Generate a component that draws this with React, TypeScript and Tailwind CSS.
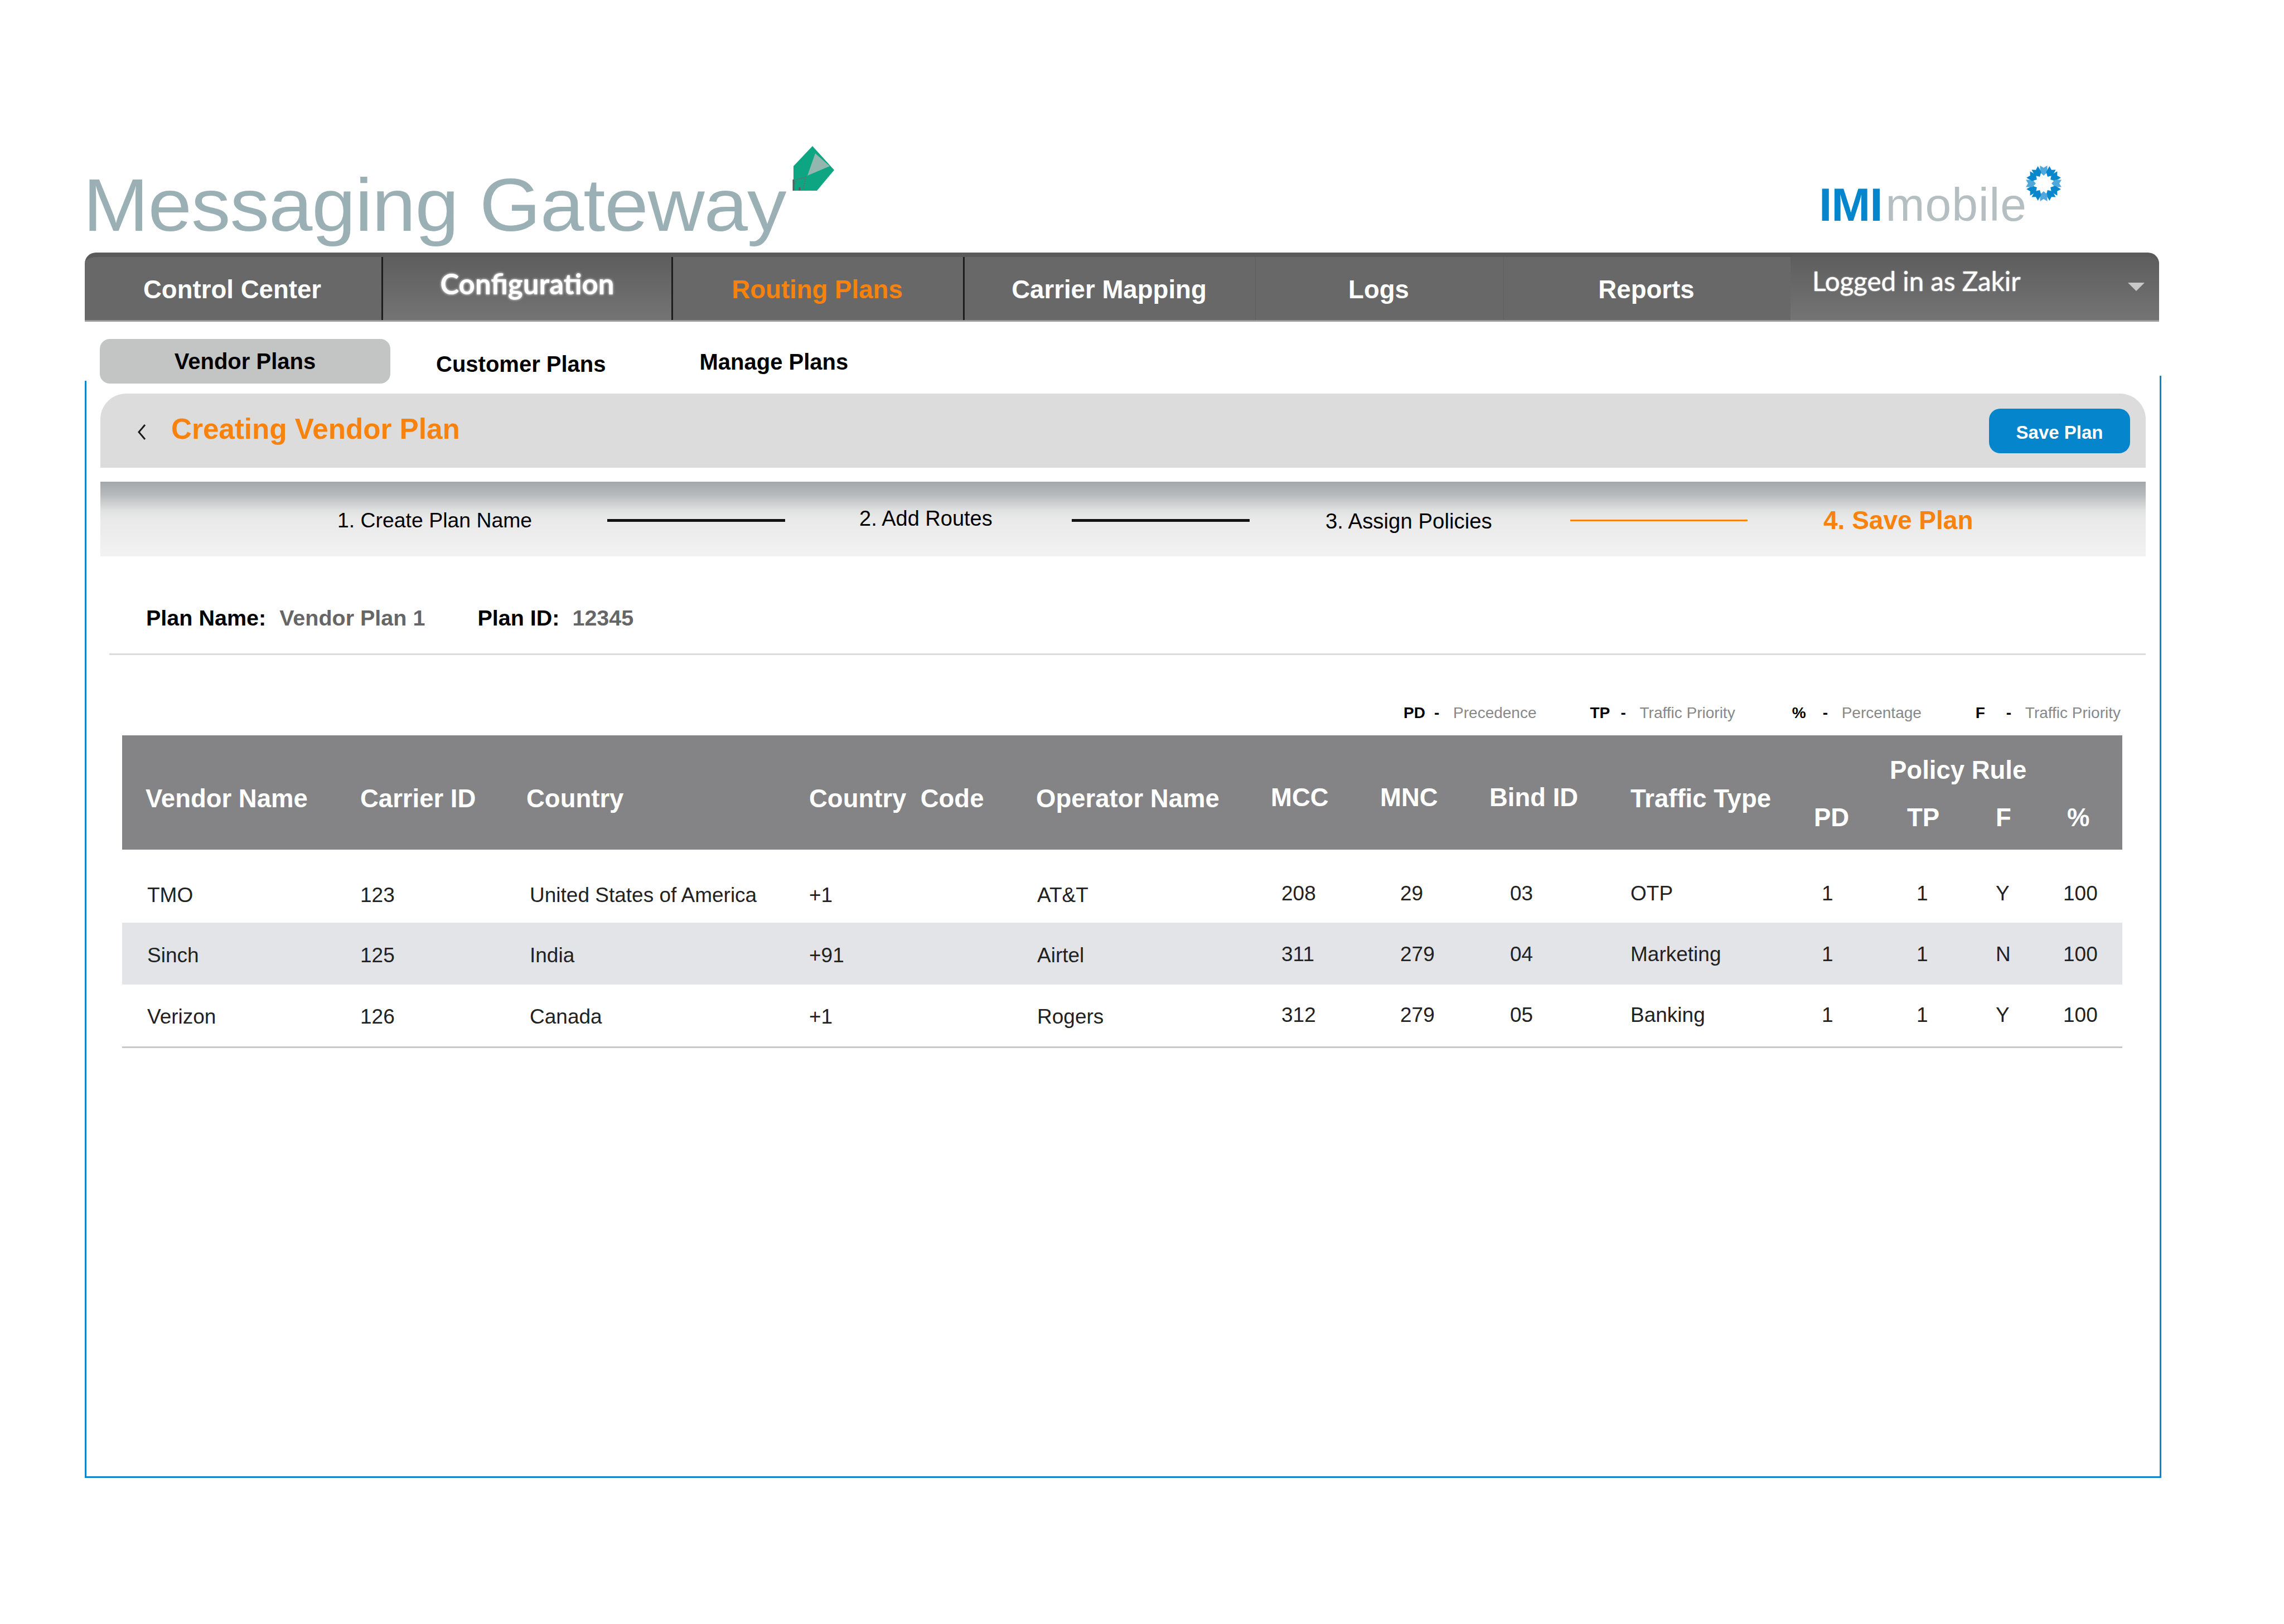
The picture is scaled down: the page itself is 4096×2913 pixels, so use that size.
import React from 'react';

const GRID = 'grid grid-cols-[427px_298px_507px_407px_421px_196px_196px_253px_329px_167px_159px_128px_99px]';

const rows = [
  ['TMO', '123', 'United States of America', '+1', 'AT&T', '208', '29', '03', 'OTP', '1', '1', 'Y', '100'],
  ['Sinch', '125', 'India', '+91', 'Airtel', '311', '279', '04', 'Marketing', '1', '1', 'N', '100'],
  ['Verizon', '126', 'Canada', '+1', 'Rogers', '312', '279', '05', 'Banking', '1', '1', 'Y', '100'],
];

// offset of each body cell from its column start, plus the small lift the right hand columns have
const cellClass = [
  'pl-[45px]',
  'pl-0',
  'pl-[6px]',
  'pl-0',
  'pl-[2px]',
  'pl-[19px] pb-[5px]',
  'pl-[36px] pb-[5px]',
  'pl-[37px] pb-[5px]',
  'pl-0 pb-[5px]',
  'pl-[14px] pb-[5px]',
  'pl-[17px] pb-[5px]',
  'pl-0 pb-[5px]',
  '-ml-[7px] pb-[5px]',
];

const legend = [
  { key: 'PD', text: 'Precedence', cls: 'mr-[96px]' },
  { key: 'TP', text: 'Traffic Priority', cls: 'mr-[102px]' },
  { key: '%', text: 'Percentage', cls: 'mr-[97px]' },
  { key: 'F', text: 'Traffic Priority', cls: '' },
];

const GemIcon = () => (
  <svg width="80" height="86" viewBox="0 0 80 86" className="absolute left-[1421px] top-[260px]">
    <polygon points="36,2 75,45 44,82 2,82 2,38" fill="#0ea583" />
    <polygon points="41,15 67,38 27,55" fill="#93b6ae" />
    <path d="M4 70 L8 62 L24 58 L20 78" fill="none" stroke="#6a6a6a" strokeWidth="2" strokeDasharray="2 2" />
    <path d="M2 62 V82 M13 76 V82" stroke="#5a5a5a" strokeWidth="3" />
  </svg>
);

const SunIcon = () => (
  <svg width="68" height="68" viewBox="-34 -34 68 68" className="absolute left-[-3px] top-[-9px]">
    {Array.from({ length: 12 }).map((_, i) => (
      <polygon
        key={i}
        points="-6.5,-32 0,-28 6.5,-32 6.5,-20 0,-14 -6.5,-20"
        fill={i % 3 === 0 ? '#4ea8dc' : '#0a86cc'}
        transform={`rotate(${i * 30})`}
      />
    ))}
  </svg>
);

const NavItem = ({ label, width, className = '' }: { label: string; width: string; className?: string }) => (
  <div className={`${width} h-full flex items-center justify-center pt-[5px] pr-[3px] text-[45.6px] font-bold ${className}`}>
    {label}
  </div>
);

export default function App() {
  return (
    <div className="w-[4096px] h-[2913px] bg-white font-['Liberation_Sans',sans-serif] text-black overflow-hidden">
      {/* logos */}
      <div className="relative h-[453px] pt-[302px] pl-[149px] flex">
        <div className="text-[133px] leading-none text-[#9ab0b5] tracking-[-1px] origin-left scale-x-[1.061]">Messaging Gateway</div>
        <GemIcon />
        <div className="ml-auto mr-[461px] mt-[23px] flex leading-none text-[84px] relative h-[84px]">
          <span className="font-bold text-[#0585cc] tracking-[-1px]">IMI</span>
          <span className="ml-[6px] text-[#b5bfc2] tracking-[1px]">mobile</span>
          <div className="absolute left-[372px] top-[-21px]">
            <SunIcon />
          </div>
        </div>
      </div>

      {/* main nav */}
      <div className="mx-[152px] w-[3720px] h-[124px] rounded-t-[20px] overflow-hidden flex text-white bg-[#686868] border-t-[8px] border-t-[#5a5a5a] border-b-[3px] border-b-[#9a9a9a]">
        <NavItem label="Control Center" width="w-[535px]" className="border-r-[3px] border-r-[#1d1d1d]" />
        <div className="w-[520px] h-full flex items-center justify-center pb-[16px] text-[51px] font-bold font-['Lato',sans-serif] bg-gradient-to-b from-[#5e5e5e] to-[#747474] border-r-[3px] border-r-[#1d1d1d] [text-shadow:0_0_4px_#ffffff]">
          Configuration
        </div>
        <NavItem label="Routing Plans" width="w-[523px]" className="text-[#f7830e] border-r-[3px] border-r-[#1d1d1d]" />
        <NavItem label="Carrier Mapping" width="w-[522px]" className="border-r border-r-[#5e5e5e]" />
        <NavItem label="Logs" width="w-[445px]" className="border-r border-r-[#5e5e5e]" />
        <NavItem label="Reports" width="w-[514px]" />
        <div className="flex-1 h-full flex items-start pl-[39px] pr-[26px] pt-[13px] bg-gradient-to-b from-[#5e5e5e] to-[#747474]">
          <span className="text-[47.5px] leading-[60px] font-['Lato',sans-serif] [text-shadow:0_0_2px_#ffffff]">Logged in as Zakir</span>
          <span className="ml-auto mt-[33px] w-0 h-0 border-x-[15px] border-x-transparent border-t-[15px] border-t-[#c8c8c8]" />
        </div>
      </div>

      {/* sub tabs */}
      <div className="h-[106px] pl-[179px] pt-[31px] flex items-start text-[40px] font-bold">
        <div className="w-[521px] h-[80px] rounded-[18px] bg-[#c3c4c4] flex items-center justify-center">Vendor Plans</div>
        <div className="ml-[82px] mt-[20px] leading-[50px]">Customer Plans</div>
        <div className="ml-[168px] mt-[16px] leading-[50px]">Manage Plans</div>
      </div>

      {/* panel */}
      <div className="relative ml-[152px] w-[3724px] h-[1968px] border-x-[3px] border-b-[3px] border-[#0a86cc] pt-[23px] pl-[25px] pr-[25px]">
        <span className="absolute right-[-3px] top-[-9px] w-[3px] h-[9px] bg-[#0a86cc]" />
        <div className="h-[133px] rounded-t-[46px] bg-[#dcdcdc] flex items-center pl-[64px] pr-[28px]">
          <svg width="20" height="32" viewBox="0 0 20 32" className="mt-[4px]">
            <path d="M16 3 L5 16 L16 29" fill="none" stroke="#1a1a1a" strokeWidth="3" />
          </svg>
          <div className="ml-[43px] mb-[5px] text-[51.2px] font-bold text-[#f7830e]">Creating Vendor Plan</div>
          <button className="ml-auto w-[253px] h-[80px] pt-[6px] rounded-[20px] bg-[#0585cc] text-white text-[33px] font-bold">Save Plan</button>
        </div>

        {/* steps */}
        <div className="mt-[25px] h-[134px] flex items-center pl-[425px] pt-[5px] text-[37.4px] bg-[linear-gradient(to_bottom,#a4a7a9_0%,#b8bbbc_18%,#dfe0e0_38%,#e9e9e9_50%,#f2f2f2_100%)]">
          <span className="w-[484px] whitespace-nowrap">1. Create Plan Name</span>
          <span className="w-[319px] h-[5px] bg-[#111]" />
          <span className="ml-[133px] w-[381px] mb-[6px] text-[38px] whitespace-nowrap">2. Add Routes</span>
          <span className="w-[319px] h-[5px] bg-[#111]" />
          <span className="ml-[136px] w-[439px] mt-[3px] text-[38.4px] whitespace-nowrap">3. Assign Policies</span>
          <span className="w-[318px] h-[3px] bg-[#f7830e]" />
          <span className="ml-[136px] text-[46px] font-bold text-[#f7830e]">4. Save Plan</span>
        </div>

        {/* plan info */}
        <div className="h-[177px] ml-[16px] pt-[85px] pl-[66px] border-b-[3px] border-b-[#dcdcdc] flex text-[39.5px] leading-[50px] font-bold">
          <span>Plan Name:</span>
          <span className="ml-[24px] text-[#666666]">Vendor Plan 1</span>
          <span className="ml-[94px]">Plan ID:</span>
          <span className="ml-[23px] text-[#666666]">12345</span>
        </div>

        {/* legend */}
        <div className="h-[144px] w-[3623px] flex justify-end items-start pt-[88px] text-[28px] leading-[32px]">
          {legend.map((l) => (
            <div key={l.key + l.text} className={`flex ${l.cls}`}>
              <span className="w-[55px] font-bold">{l.key}</span>
              <span className="w-[34px] font-bold">-</span>
              <span className="text-[#888888]">{l.text}</span>
            </div>
          ))}
        </div>

        {/* table */}
        <div className="ml-[39px] w-[3587px] border-b-[3px] border-b-[#c8c8c8]">
          <div className={`${GRID} grid-rows-[92px_113px] h-[205px] bg-[#848486] text-white text-[45.5px] font-bold`}>
            <div className="row-span-2 pl-[42px] pt-[80px]">Vendor Name</div>
            <div className="row-span-2 pt-[80px]">Carrier ID</div>
            <div className="row-span-2 pt-[80px]">Country</div>
            <div className="row-span-2 pt-[80px] whitespace-pre">Country  Code</div>
            <div className="row-span-2 pt-[80px]">Operator Name</div>
            <div className="row-span-2 pt-[78px]">MCC</div>
            <div className="row-span-2 pt-[78px]">MNC</div>
            <div className="row-span-2 pt-[78px]">Bind ID</div>
            <div className="row-span-2 pt-[80px]">Traffic Type</div>
            <div className="col-span-4 pl-[136px] pt-[29px]">Policy Rule</div>
            <div className="pt-[22px]">PD</div>
            <div className="pt-[22px]">TP</div>
            <div className="pt-[22px]">F</div>
            <div className="pt-[22px]">%</div>
          </div>
          {rows.map((row, r) => (
            <div
              key={row[0]}
              className={`${GRID} items-center text-[37px] text-[#222222] ${
                r === 0 ? 'h-[131px] pt-[32px]' : r === 1 ? 'h-[111px] pt-[7px] bg-[#e3e4e8]' : 'h-[111px] pt-[4px]'
              }`}
            >
              {row.map((v, i) => (
                <div key={i} className={cellClass[i]}>{v}</div>
              ))}
            </div>
          ))}
        </div>
      </div>
    </div>
  );
}
